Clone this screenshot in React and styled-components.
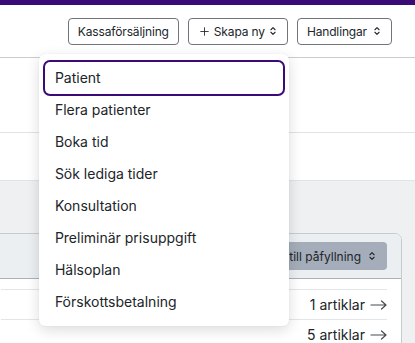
import React from 'react';
import styled, { createGlobalStyle } from 'styled-components';
import { ChevronsUpDown, Plus } from 'lucide-react';

const Global = createGlobalStyle`
  html, body { margin: 0; padding: 0; }
  body {
    font-family: Inter, "Noto Sans", sans-serif;
    color: #212529;
    background: #fff;
    overflow: hidden;
  }
`;

const Page = styled.div`
  width: 415px;
  height: 343px;
  display: flex;
  flex-direction: column;
  overflow: hidden;
`;

const TopBar = styled.div`
  height: 5px;
  background: #3a0b77;
  flex: none;
`;

const Toolbar = styled.div`
  height: 52px;
  display: flex;
  align-items: center;
  justify-content: flex-end;
  gap: 9px;
  padding-right: 23px;
  border-bottom: 1px solid #c9cdd1;
  flex: none;
`;

const Button = styled.button`
  height: 27px;
  display: flex;
  align-items: center;
  gap: ${p => (p.$tight ? 3 : 5)}px;
  padding: 0 9px;
  background: #fff;
  border: 1px solid #6f757b;
  border-radius: 4px;
  font-family: Inter, "Noto Sans", sans-serif;
  font-size: 12px;
  letter-spacing: -0.15px;
  color: #212529;
  cursor: pointer;
`;

const DropWrap = styled.div`
  position: relative;
`;

const Menu = styled.div`
  position: absolute;
  top: calc(100% + 9px);
  right: -1px;
  width: 250px;
  padding: 8px 0;
  background: #fff;
  border-radius: 6px;
  box-shadow: 0 4px 14px rgba(0, 0, 0, 0.14), 0 0 1px rgba(0, 0, 0, 0.12);
  display: flex;
  flex-direction: column;
  z-index: 10;
`;

const MenuItem = styled.div`
  height: 32px;
  margin: 0 6px;
  padding: 0 10px;
  display: flex;
  align-items: center;
  font-size: 14px;
  color: #212529;
  border-radius: 5px;
  box-shadow: ${p => (p.$active ? '0 0 0 2px #3a0b77' : 'none')};
`;

const Section = styled.div`
  height: ${p => p.$h}px;
  border-bottom: 1px solid #e1e4e7;
  flex: none;
`;

const GrayArea = styled.div`
  flex: 1;
  background: #eef0f2;
  padding: 52px 13px 0 0;
`;

const Card = styled.div`
  margin-left: -10px;
  border: 1px solid #c6cbd0;
  border-radius: 7px;
  background: #fff;
  overflow: hidden;
`;

const CardHead = styled.div`
  height: 44px;
  background: #eceff1;
  border-bottom: 1px solid #aab1b8;
  display: flex;
  align-items: center;
  justify-content: flex-end;
  padding-right: 14px;
`;

const GrayButton = styled.button`
  height: 28px;
  display: flex;
  align-items: center;
  gap: 6px;
  padding: 0 10px 0 12px;
  background: #a4adb9;
  border: none;
  border-radius: 4px;
  font-family: Inter, "Noto Sans", sans-serif;
  font-size: 12px;
  color: #212529;
`;

const CardBody = styled.div`
  padding: 10px 14px 0 10px;
`;

const Row = styled.div`
  height: 29px;
  border-top: 1px solid #e3e6e9;
  display: flex;
  align-items: center;
  justify-content: flex-end;
  gap: 5px;
  font-size: 14px;
  color: #212529;
`;

const Arrow = () => (
  <svg width="17" height="10" viewBox="0 0 17 10" fill="none" stroke="#474c52" strokeWidth="1.2" strokeLinecap="round" strokeLinejoin="round">
    <path d="M1 5H16M11.5 1L16 5L11.5 9" />
  </svg>
);

const menuItems = [
  'Patient',
  'Flera patienter',
  'Boka tid',
  'Sök lediga tider',
  'Konsultation',
  'Preliminär prisuppgift',
  'Hälsoplan',
  'Förskottsbetalning',
];

const App = () => {
  return (
    <Page>
      <Global />
      <TopBar />
      <Toolbar>
        <Button>Kassaförsäljning</Button>
        <DropWrap>
          <Button $tight>
            <Plus size={13} strokeWidth={1.6} />
            Skapa ny
            <ChevronsUpDown size={10} strokeWidth={2.6} />
          </Button>
          <Menu>
            {menuItems.map((label, i) => (
              <MenuItem key={label} $active={i === 0}>{label}</MenuItem>
            ))}
          </Menu>
        </DropWrap>
        <Button>
          Handlingar
          <ChevronsUpDown size={10} strokeWidth={2.6} />
        </Button>
      </Toolbar>
      <Section $h={74} />
      <Section $h={47} />
      <GrayArea>
        <Card>
          <CardHead>
            <GrayButton>
              Artiklar till påfyllning
              <ChevronsUpDown size={10} strokeWidth={2.6} />
            </GrayButton>
          </CardHead>
          <CardBody>
            <Row>1 artiklar <Arrow /></Row>
            <Row>5 artiklar <Arrow /></Row>
          </CardBody>
        </Card>
      </GrayArea>
    </Page>
  );
};

export default App;
